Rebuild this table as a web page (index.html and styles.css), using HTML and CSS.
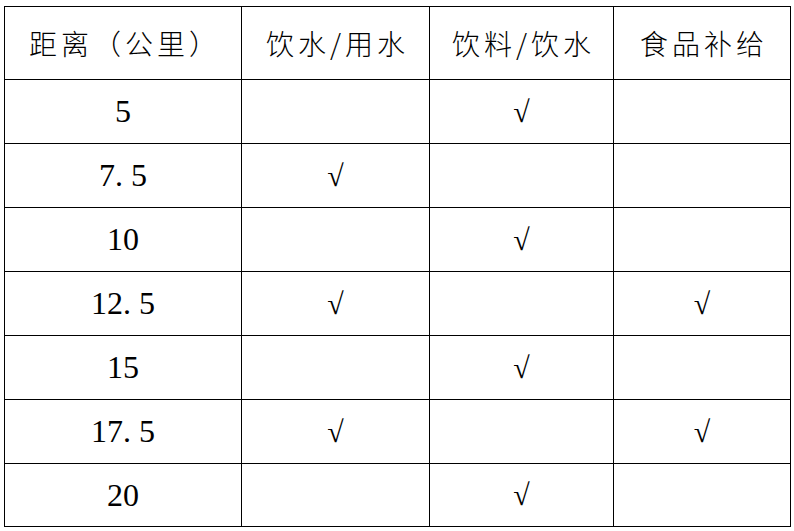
FILE: index.html
```html
<!DOCTYPE html>
<html lang="zh">
<head>
<meta charset="utf-8">
<title>补给站</title>
<link rel="stylesheet" href="styles.css">
</head>
<body>
<div class="wrap">
<table class="tbl">
<colgroup>
<col class="c1"><col class="c2"><col class="c3"><col class="c4">
</colgroup>
<thead>
<tr class="head">
<th>距离（公里）</th>
<th>饮水/用水</th>
<th>饮料/饮水</th>
<th>食品补给</th>
</tr>
</thead>
<tbody>
<tr><td class="num">5</td><td></td><td class="ck">√</td><td></td></tr>
<tr><td class="num">7. 5</td><td class="ck">√</td><td></td><td></td></tr>
<tr><td class="num">10</td><td></td><td class="ck">√</td><td></td></tr>
<tr><td class="num">12. 5</td><td class="ck">√</td><td></td><td class="ck">√</td></tr>
<tr><td class="num">15</td><td></td><td class="ck">√</td><td></td></tr>
<tr><td class="num">17. 5</td><td class="ck">√</td><td></td><td class="ck">√</td></tr>
<tr class="last"><td class="num">20</td><td></td><td class="ck">√</td><td></td></tr>
</tbody>
</table>
</div>
</body>
</html>
```
FILE: styles.css
```css
html, body {
  margin: 0;
  padding: 0;
  background: #fff;
}
.wrap {
  padding: 6px 0 0 4px;
}
.tbl {
  border-collapse: collapse;
  table-layout: fixed;
  width: 786px;
  color: #000;
}
.c1 { width: 237px; }
.c2 { width: 188px; }
.c3 { width: 184px; }
.c4 { width: 177px; }
.tbl th, .tbl td {
  border: 1px solid #000;
  padding: 0;
  text-align: center;
  vertical-align: middle;
  height: 63px;
}
.head th {
  height: 72px;
  font-family: "Noto Sans CJK SC", sans-serif;
  font-weight: 300;
  font-size: 28px;
  letter-spacing: 4px;
  text-indent: 4px;
}
.num {
  font-family: "Liberation Serif", serif;
  font-size: 32px;
}
.ck {
  font-family: "Liberation Serif", serif;
  font-size: 30px;
  line-height: 1;
}
.last td {
  height: 62px;
}
```
